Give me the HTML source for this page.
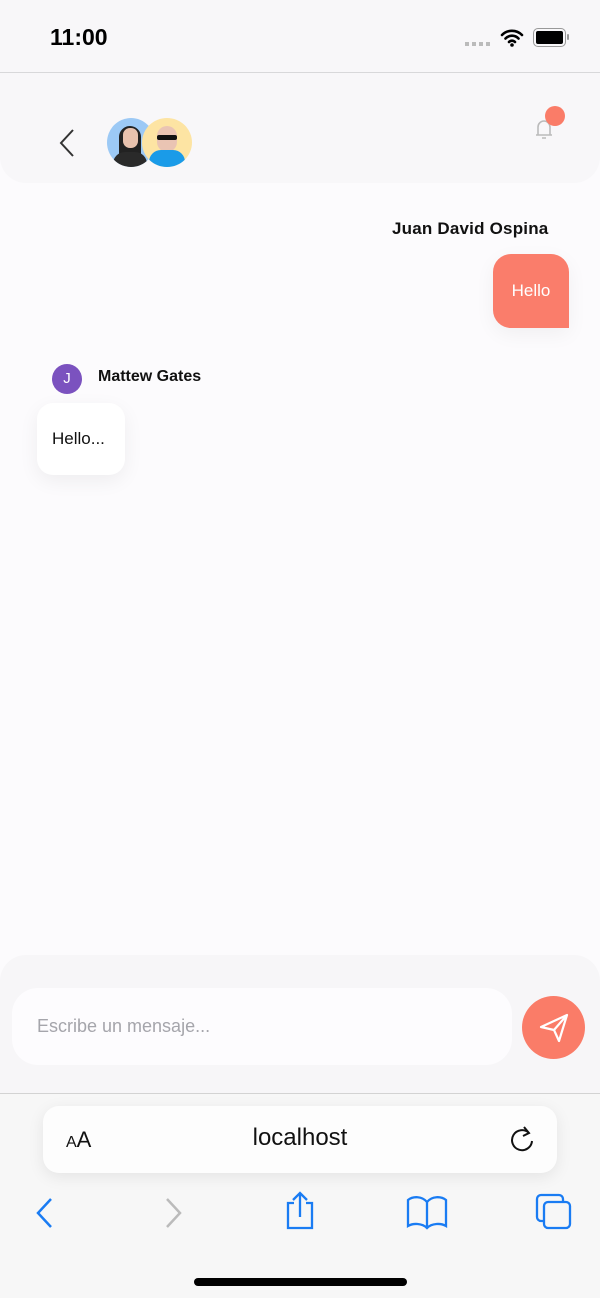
<!DOCTYPE html>
<html><head><meta charset="utf-8"><style>
*{margin:0;padding:0;box-sizing:border-box}
body{width:600px;height:1298px;background:#fcfbfd;font-family:"Liberation Sans",sans-serif;position:relative;overflow:hidden}
.a{position:absolute}
</style></head><body>
<div class="a" style="left:0;top:0;width:600px;height:183px;background:#f8f7f9;border-radius:0 0 26px 26px"></div>
<div class="a" style="left:0;top:72px;width:600px;height:1px;background:#d8d8da"></div>
<div class="a" style="left:50px;top:24px;font-size:23px;font-weight:bold;color:#000">11:00</div>
<div class="a" style="left:465px;top:42px;width:26px;height:4px;background:repeating-linear-gradient(90deg,#bbb 0 4px,transparent 4px 7px)"></div>
<svg class="a" style="left:500px;top:27px" width="24" height="20" viewBox="0 0 24 20"><path d="M2 8a14 14 0 0 1 20 0M5.5 11.5a9 9 0 0 1 13 0M9 15a4 4 0 0 1 6 0" stroke="#000" stroke-width="2.6" fill="none" stroke-linecap="round"/><circle cx="12" cy="18" r="1.8"/></svg>
<div class="a" style="left:533px;top:28px;width:33px;height:19px;border:1.5px solid #999;border-radius:5px;padding:2px"><div style="width:100%;height:100%;background:#000;border-radius:2px"></div></div>
<div class="a" style="left:567px;top:34px;width:2px;height:6px;background:#999;border-radius:1px"></div>
<svg class="a" style="left:55px;top:128px" width="22" height="30"><path d="M18 2L6 15l12 13" stroke="#333" stroke-width="2" fill="none"/></svg>
<div class="a" style="left:107px;top:118px;width:48px;height:49px;border-radius:50%;background:#9cc9f5;overflow:hidden"><div class="a" style="left:12px;top:8px;width:22px;height:30px;background:#222;border-radius:11px 11px 2px 2px"></div><div class="a" style="left:16px;top:10px;width:15px;height:20px;background:#e8c2ae;border-radius:7px"></div><div class="a" style="left:6px;top:34px;width:34px;height:18px;background:#2a2a2a;border-radius:12px 12px 0 0"></div></div>
<div class="a" style="left:142px;top:118px;width:50px;height:49px;border-radius:50%;background:#fde4a3;overflow:hidden"><div class="a" style="left:15px;top:8px;width:20px;height:26px;background:#eac4b3;border-radius:10px"></div><div class="a" style="left:15px;top:17px;width:20px;height:5px;background:#111;border-radius:2px"></div><div class="a" style="left:7px;top:32px;width:36px;height:20px;background:#1a9be8;border-radius:12px 12px 0 0"></div></div>
<svg class="a" style="left:532px;top:115px" width="24" height="26"><path d="M4 20h16M6 20V12a6 6 0 0 1 12 0v8M10 23h4" stroke="#bbb" stroke-width="1.6" fill="none"/></svg>
<div class="a" style="left:545px;top:106px;width:20px;height:20px;border-radius:50%;background:#fa7c68"></div>
<div class="a" style="left:392px;top:219px;font-size:17px;font-weight:bold;color:#111;letter-spacing:.2px">Juan David Ospina</div>
<div class="a" style="left:493px;top:254px;width:76px;height:74px;background:#fa7d6b;border-radius:18px 18px 0 18px;box-shadow:0 6px 20px rgba(0,0,0,.05);color:#fff;font-size:17px;text-align:center;line-height:74px">Hello</div>
<div class="a" style="left:52px;top:364px;width:30px;height:30px;border-radius:50%;background:#7b52bf;color:#fff;font-size:15px;text-align:center;line-height:30px">J</div>
<div class="a" style="left:98px;top:368px;font-size:16px;font-weight:bold;color:#111">Mattew Gates</div>
<div class="a" style="left:37px;top:403px;width:88px;height:72px;background:#fff;border-radius:16px;box-shadow:0 6px 20px rgba(0,0,0,.06);font-size:17px;line-height:72px;padding-left:15px;color:#111">Hello...</div>
<div class="a" style="left:0;top:955px;width:600px;height:140px;background:#f7f6f8;border-radius:26px 26px 0 0"></div>
<div class="a" style="left:12px;top:988px;width:500px;height:77px;background:#fdfcfe;border-radius:26px;font-size:18px;color:#a5a5ab;line-height:77px;padding-left:25px">Escribe un mensaje...</div>
<div class="a" style="left:522px;top:996px;width:63px;height:63px;border-radius:50%;background:#fa7c68"></div>
<svg class="a" style="left:537px;top:1010px" width="34" height="34" viewBox="0 0 34 34"><path d="M4 17L30 5 22 31 17 20z M17 20L30 5" stroke="#fff" stroke-width="2.2" fill="none" stroke-linejoin="round"/></svg>
<div class="a" style="left:0;top:1093px;width:600px;height:205px;background:#f7f7f7;border-top:1px solid #d3d3d3"></div>
<div class="a" style="left:43px;top:1106px;width:514px;height:67px;background:#fdfdfd;border-radius:16px;box-shadow:0 4px 16px rgba(0,0,0,.08)"></div>
<div class="a" style="left:66px;top:1127px;color:#111"><span style="font-size:16px">A</span><span style="font-size:22px">A</span></div>
<div class="a" style="left:0;top:1124px;width:600px;text-align:center;font-size:24px;color:#111">localhost</div>
<svg class="a" style="left:509px;top:1125px" width="28" height="30"><path d="M20 8A10 10 0 1 0 23 16M15 2l5 6-6 3" stroke="#111" stroke-width="2" fill="none"/></svg>
<svg class="a" style="left:32px;top:1196px" width="24" height="34"><path d="M19 3L6 17l13 14" stroke="#1a7cf3" stroke-width="2.5" fill="none"/></svg>
<svg class="a" style="left:162px;top:1196px" width="24" height="34"><path d="M5 3l13 14L5 31" stroke="#bbb" stroke-width="2.5" fill="none"/></svg>
<svg class="a" style="left:284px;top:1190px" width="32" height="40"><path d="M10 13H4v25h24V13h-6M16 27V3M9 10l7-7 7 7" stroke="#1a7cf3" stroke-width="2.3" fill="none"/></svg>
<svg class="a" style="left:405px;top:1194px" width="44" height="36"><path d="M22 8C17 2 8 2 3 6v26c5-3 14-3 19 2 5-5 14-5 19-2V6c-5-4-14-4-19 2zM22 8v26" stroke="#1a7cf3" stroke-width="2.3" fill="none"/></svg>
<svg class="a" style="left:535px;top:1193px" width="38" height="38"><rect x="2" y="2" width="26" height="26" rx="4" stroke="#1a7cf3" stroke-width="2.3" fill="none"/><rect x="9" y="9" width="26" height="26" rx="4" stroke="#1a7cf3" stroke-width="2.3" fill="#f7f7f7"/></svg>
<div class="a" style="left:194px;top:1278px;width:213px;height:8px;background:#000;border-radius:4px"></div>
</body></html>
